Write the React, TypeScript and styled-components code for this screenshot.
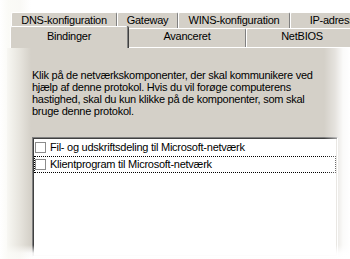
import React from 'react'
import styled, { createGlobalStyle } from 'styled-components'

const GlobalStyle = createGlobalStyle`
  html, body {
    margin: 0;
    padding: 0;
    background: #fff;
  }
`

const Frame = styled.div`
  position: relative;
  width: 350px;
  height: 259px;
  overflow: hidden;
  background: #fff;
  padding-top: 12px;
  box-sizing: border-box;
  font-family: "Liberation Sans", Arial, sans-serif;
  font-size: 11px;
  letter-spacing: -0.25px;
  color: #000;
`

const TabRow = styled.div<{ $offset: number; $front?: boolean }>`
  display: flex;
  align-items: flex-end;
  padding-left: ${p => p.$offset}px;
  margin-top: ${p => (p.$front ? -2 : 0)}px;
  white-space: nowrap;
`

const Tab = styled.div<{ $width: number; $back?: boolean; $selected?: boolean }>`
  flex: 0 0 auto;
  width: ${p => p.$width}px;
  height: ${p => (p.$back ? 16 : p.$selected ? 22 : 19)}px;
  margin-bottom: ${p => (p.$selected ? -1 : 0)}px;
  position: relative;
  z-index: ${p => (p.$selected ? 2 : 1)};
  box-sizing: border-box;
  display: flex;
  align-items: center;
  justify-content: center;
  padding-bottom: ${p => (p.$back ? 0 : 3)}px;
  line-height: 13px;
  background: #d4d0c8;
  border-top: 1px solid #fff;
  border-left: 1px solid #fff;
  border-right: 1px solid #808080;
  border-radius: 2px 2px 0 0;
  box-shadow: ${p => (p.$selected ? '1px 0 0 #404040' : 'none')};
`

const Panel = styled.div`
  margin-left: 6px;
  width: 360px;
  height: 220px;
  box-sizing: border-box;
  background: #d4d0c8;
  border-top: 1px solid #fff;
  border-left: 1px solid #fff;
  padding: 21px 0 0 25px;
`

const Description = styled.p`
  margin: 0;
  line-height: 12px;
`

const ListBox = styled.div`
  margin-top: 20px;
  width: 306px;
  height: 120px;
  box-sizing: border-box;
  background: #fff;
  border: 1px solid;
  border-color: #808080 #fff #fff #808080;
  box-shadow: inset 1px 1px 0 #404040, inset -1px -1px 0 #d4d0c8;
  padding: 1px;
`

const Row = styled.div<{ $focused?: boolean }>`
  height: 17px;
  box-sizing: border-box;
  display: flex;
  align-items: center;
  border: 1px dotted ${p => (p.$focused ? '#000' : 'transparent')};
  line-height: 13px;
`

const CheckBox = styled.span`
  width: 11px;
  height: 11px;
  box-sizing: border-box;
  border: 1px solid #8c8c8c;
  background: #fff;
  margin-right: 4px;
  flex: 0 0 auto;
`

const Fade = styled.div`
  position: absolute;
  inset: 0;
  pointer-events: none;
  background:
    linear-gradient(to right, #fff 0px, rgba(250, 250, 246, 0.9) 8px, rgba(245, 244, 238, 0.55) 20px, rgba(245, 244, 238, 0) 31px),
    linear-gradient(to left, #fff 0px, rgba(255, 255, 255, 0.9) 7px, rgba(255, 255, 255, 0.4) 15px, rgba(255, 255, 255, 0) 26px),
    linear-gradient(to top, #fff 0px, rgba(255, 255, 255, 0.9) 6px, rgba(255, 255, 255, 0) 14px),
    linear-gradient(to bottom, #fff 0px, rgba(255, 255, 255, 0.5) 10px, rgba(255, 255, 255, 0) 16px);
`

const backTabs = [
  { label: 'DNS-konfiguration', width: 106 },
  { label: 'Gateway', width: 61 },
  { label: 'WINS-konfiguration', width: 112 },
  { label: 'IP-adresse', width: 90 },
]

const frontTabs = [
  { label: 'Bindinger', width: 118, selected: true },
  { label: 'Avanceret', width: 118 },
  { label: 'NetBIOS', width: 112 },
]

const items = [
  { label: 'Fil- og udskriftsdeling til Microsoft-netværk' },
  { label: 'Klientprogram til Microsoft-netværk', focused: true },
]

export default function App() {
  return (
    <>
      <GlobalStyle />
      <Frame>
        <TabRow $offset={11}>
          {backTabs.map(t => (
            <Tab key={t.label} $width={t.width} $back>
              {t.label}
            </Tab>
          ))}
        </TabRow>
        <TabRow $offset={10} $front>
          {frontTabs.map(t => (
            <Tab key={t.label} $width={t.width} $selected={t.selected}>
              {t.label}
            </Tab>
          ))}
        </TabRow>
        <Panel>
          <Description>
            Klik på de netværkskomponenter, der skal kommunikere ved
            <br />
            hjælp af denne protokol. Hvis du vil forøge computerens
            <br />
            hastighed, skal du kun klikke på de komponenter, som skal
            <br />
            bruge denne protokol.
          </Description>
          <ListBox>
            {items.map(it => (
              <Row key={it.label} $focused={it.focused}>
                <CheckBox />
                {it.label}
              </Row>
            ))}
          </ListBox>
        </Panel>
        <Fade />
      </Frame>
    </>
  )
}
